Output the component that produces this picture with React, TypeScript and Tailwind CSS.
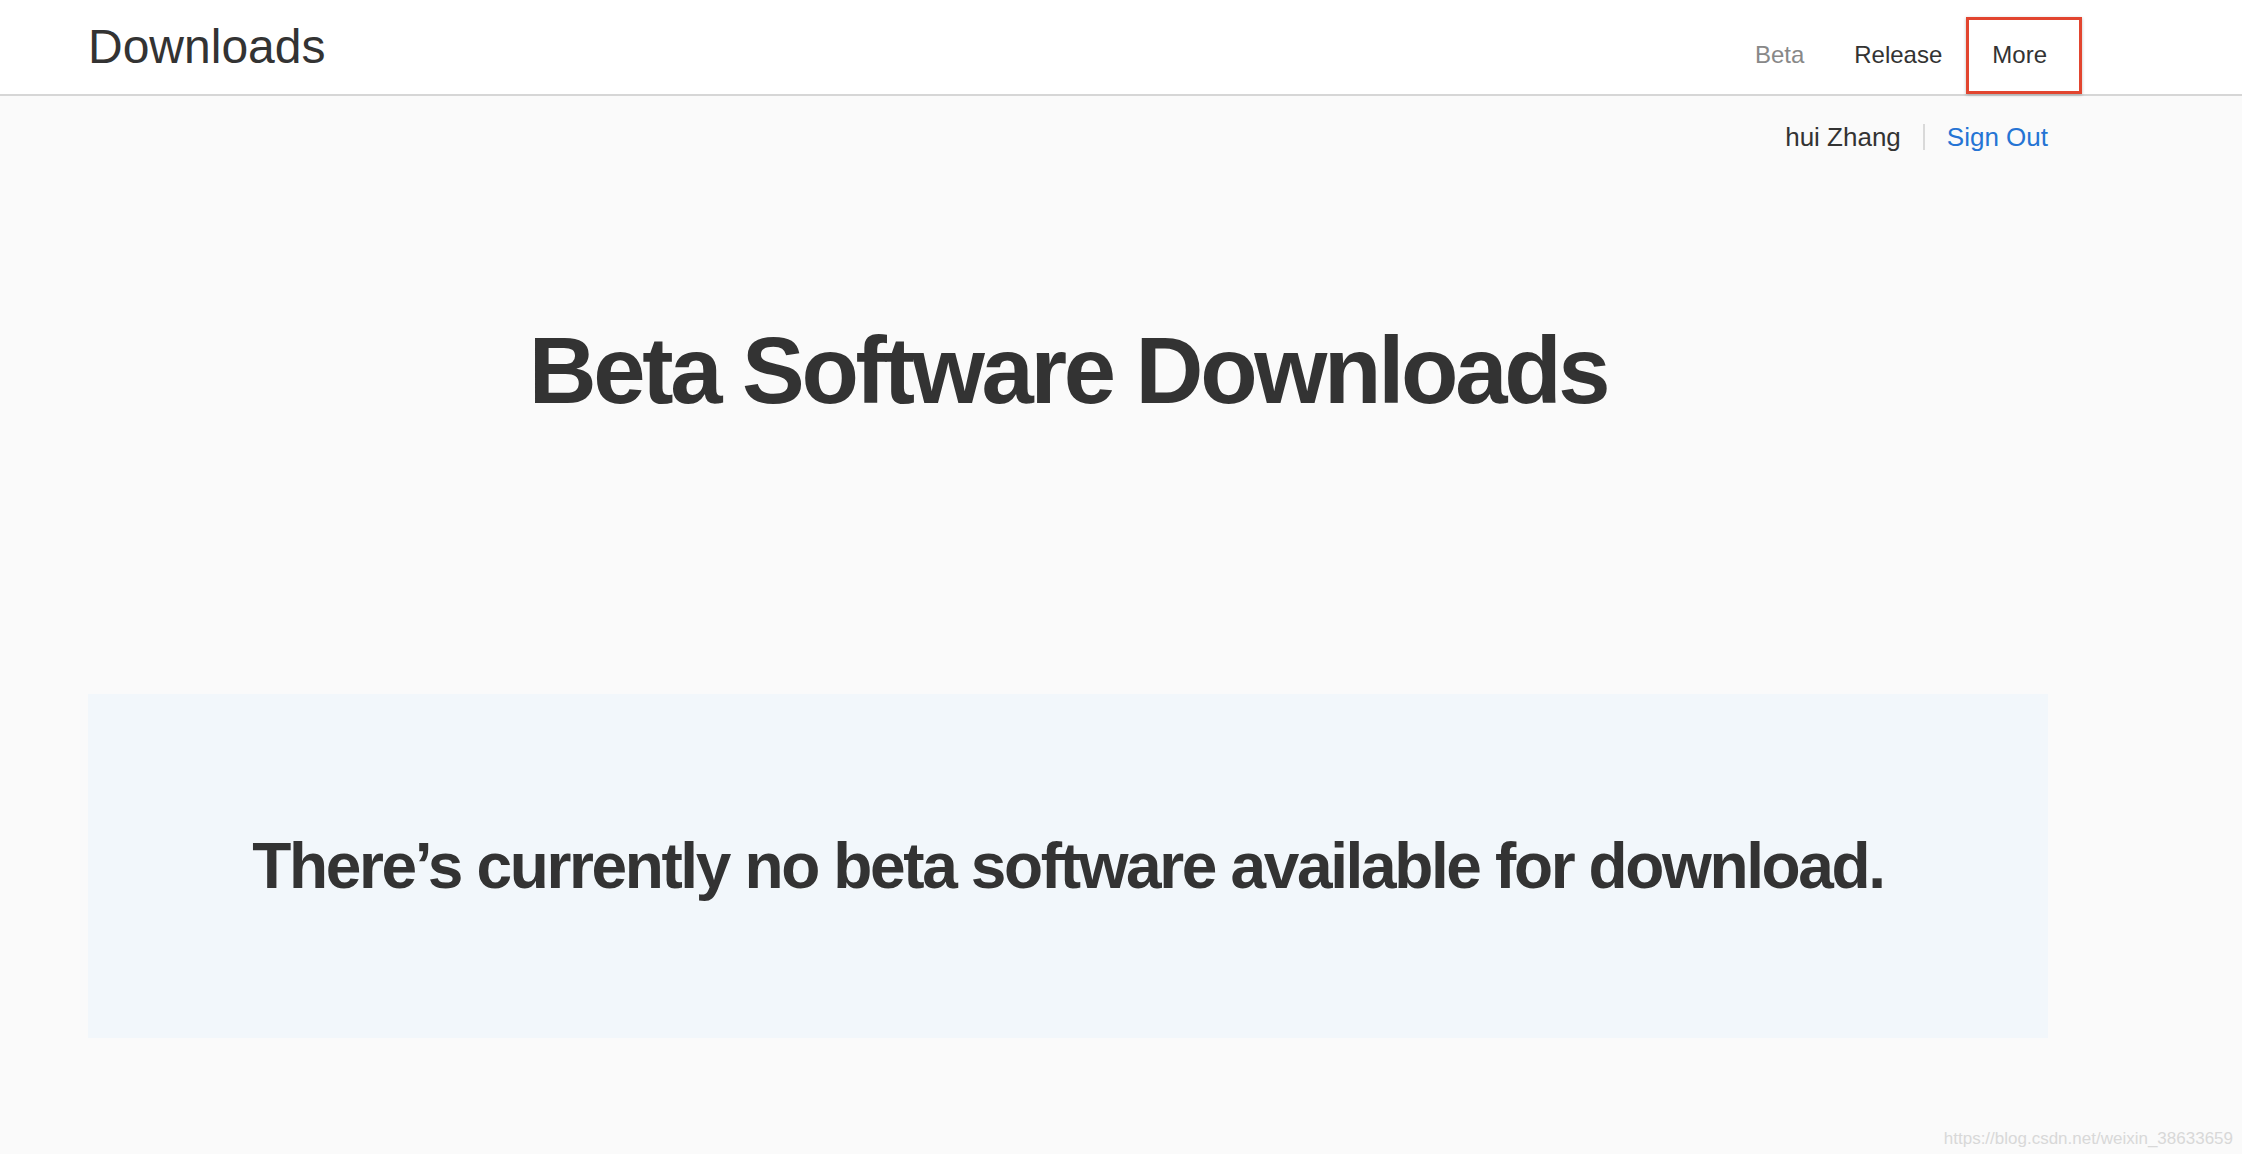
import React from 'react';

const navItems = [
    { label: 'Beta', active: true },
    { label: 'Release', active: false },
];

const App = () => {
    return (
        <div className="relative min-h-screen bg-[#fafafa] font-['Liberation_Sans',Arial,sans-serif] text-[#333333]">
            {/* Top bar */}
            <header className="flex h-[96px] justify-between border-b-2 border-[#d6d6d6] bg-white pl-[88px] pr-[160px]">
                <h1 className="self-center text-[48px] leading-none font-normal">Downloads</h1>
                <nav className="flex items-start gap-[50px] pt-[17px]">
                    {navItems.map((item) => (
                        <a
                            key={item.label}
                            className={`flex h-[76px] items-center text-[24px] leading-none ${
                                item.active ? 'text-[#888888]' : 'text-[#333333]'
                            }`}
                        >
                            {item.label}
                        </a>
                    ))}
                    {/* highlighted item */}
                    <a className="-ml-[26px] flex h-[77px] items-center border-[3px] border-[#e2452f] pb-[2px] pl-[23px] pr-[32px] text-[24px] leading-none shadow-[0_1px_3px_rgba(0,0,0,0.25)]">
                        More
                    </a>
                </nav>
            </header>

            <main className="pl-[88px] pr-[194px]">
                {/* account */}
                <div className="mt-[28px] flex items-center justify-end gap-[22px] text-[26px] leading-none">
                    <span>hui Zhang</span>
                    <span className="h-[26px] w-[2px] bg-[#d9d9d9]" />
                    <a className="text-[#2574d4]">Sign Out</a>
                </div>

                <h2 className="mt-[174px] text-center text-[94px] leading-none font-bold tracking-[-0.035em]">
                    Beta Software Downloads
                </h2>

                <section className="mt-[276px] flex h-[344px] items-center justify-center bg-[#f2f7fb]">
                    <p className="text-[64px] leading-none font-bold tracking-[-0.037em]">
                        There’s currently no beta software available for download.
                    </p>
                </section>
            </main>

            <span className="absolute right-[9px] bottom-[7px] text-[17px] leading-none text-[#d8d8d8]">
                https://blog.csdn.net/weixin_38633659
            </span>
        </div>
    );
};

export default App;
